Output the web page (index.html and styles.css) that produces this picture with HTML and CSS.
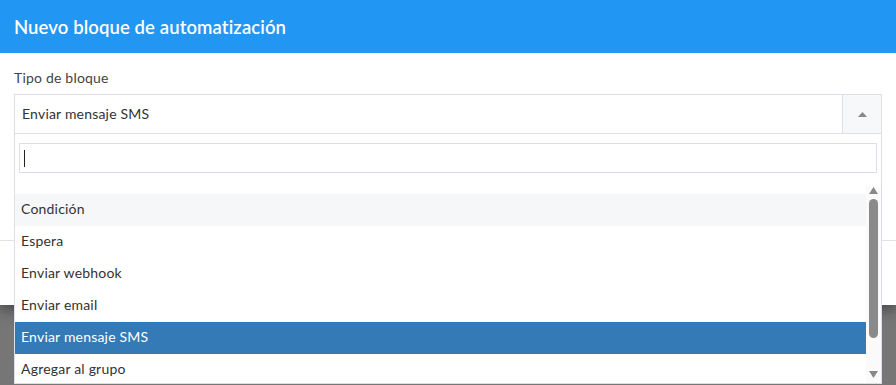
FILE: index.html
```html
<!DOCTYPE html>
<html lang="es">
<head>
<meta charset="utf-8">
<title>Nuevo bloque de automatización</title>
<link rel="stylesheet" href="styles.css">
</head>
<body>
<div class="modal">
  <div class="modal-header"><h4 class="modal-title">Nuevo bloque de automatización</h4></div>
  <div class="modal-body">
    <label class="field-label">Tipo de bloque</label>
    <div class="select">
      <span class="select-text">Enviar mensaje SMS</span>
      <span class="select-arrow"><svg width="9" height="5" viewBox="0 0 9 5"><path d="M0 5 L4.5 0 L9 5 Z" fill="#888"/></svg></span>
    </div>
  </div>
  <div class="modal-footer"></div>

  <div class="dropdown">
    <div class="search"><div class="search-input"><span class="caret"></span></div></div>
    <div class="results">
      <ul class="options">
        <li class="option hover">Condición</li>
        <li class="option">Espera</li>
        <li class="option">Enviar webhook</li>
        <li class="option">Enviar email</li>
        <li class="option selected">Enviar mensaje SMS</li>
        <li class="option">Agregar al grupo</li>
      </ul>
      <div class="scrollbar">
        <svg class="sb-arrow" width="9" height="7" viewBox="0 0 9 7"><path d="M0 7 L4.5 0 L9 7 Z" fill="#888"/></svg>
        <div class="sb-thumb"></div>
        <svg class="sb-arrow" width="9" height="7" viewBox="0 0 9 7"><path d="M0 0 L4.5 7 L9 0 Z" fill="#888"/></svg>
      </div>
    </div>
  </div>
</div>
</body>
</html>
```
FILE: styles.css
```css
* { box-sizing: border-box; }
html, body { margin: 0; padding: 0; }
body {
  background: #767676;
  font-family: Lato, "Noto Sans", sans-serif;
  font-size: 14px;
  letter-spacing: 0.2px;
  color: #333;
  width: 896px;
  height: 385px;
  overflow: hidden;
}
.modal {
  position: relative;
  background: #fff;
  width: 896px;
  box-shadow: 0 4px 14px rgba(0,0,0,0.45);
}
.modal-header {
  background: #2196f3;
  height: 53px;
  padding: 0 14px;
  display: flex;
  align-items: center;
}
.modal-title {
  margin: 0;
  color: #fff;
  font-size: 18.5px;
  font-weight: 600;
  letter-spacing: 0.1px;
  line-height: 24px;
}
.modal-body {
  padding: 16px 14px 0 14px;
  height: 187px;
}
.field-label {
  display: block;
  line-height: 18px;
  color: #444;
  margin-bottom: 7px;
}
.select {
  display: flex;
  height: 40px;
  width: 868px;
  border: 1px solid #dcdfe8;
}
.select-text {
  flex: 1;
  padding-left: 7px;
  line-height: 38px;
  color: #333;
}
.select-arrow {
  width: 39px;
  background: #f7f8fa;
  border-left: 1px solid #dcdfe8;
  display: flex;
  align-items: center;
  justify-content: center;
}
.modal-footer {
  height: 65px;
  border-top: 1px solid #dfe2e6;
}
.dropdown {
  position: absolute;
  top: 134px;
  left: 14px;
  width: 868px;
  background: #fff;
  border: 1px solid #dcdfe8;
  border-top: none;
}
.search {
  padding: 9px 4px 13px 4px;
}
.search-input {
  height: 30px;
  border: 1px solid #dcdfe8;
  padding: 6px 4px;
}
.caret {
  display: block;
  width: 1px;
  height: 17px;
  background: #222;
}
.results {
  display: flex;
  height: 197px;
  overflow: hidden;
}
.options {
  list-style: none;
  margin: 0;
  padding: 8px 0 0 0;
  flex: 1;
}
.option {
  height: 32px;
  line-height: 30px;
  padding-left: 6px;
  color: #333;
}
.option.hover { background: #f6f7f9; }
.option.selected { background: #337ab7; color: #fff; }
.scrollbar {
  width: 15px;
  background: #fafafa;
  display: flex;
  flex-direction: column;
  align-items: center;
  padding: 1px 0 5px 0;
}
.sb-arrow { flex: none; }
.sb-thumb {
  width: 9px;
  height: 139px;
  margin: 5px 0 auto 0;
  background: #8a8a8a;
  border-radius: 5px;
}
```
